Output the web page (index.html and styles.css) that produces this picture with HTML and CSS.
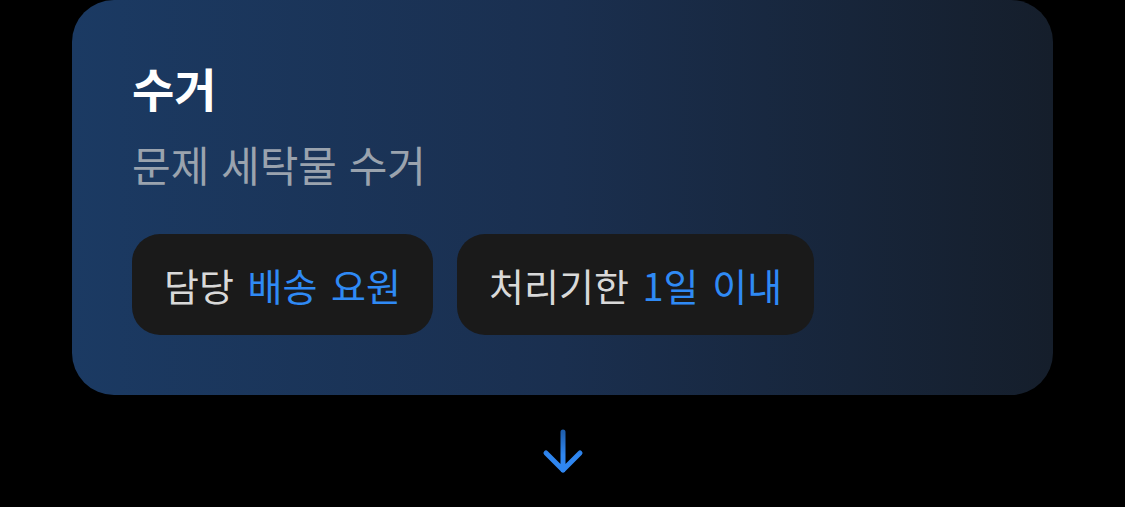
FILE: index.html
```html
<!DOCTYPE html>
<html lang="ko">
<head>
  <meta charset="UTF-8">
  <title>수거</title>
  <link rel="stylesheet" href="styles.css">
</head>
<body>
  <section class="card">
    <h2 class="title">수거</h2>
    <p class="subtitle">문제 세탁물 수거</p>
    <div class="tags">
      <div class="tag">담당 <span class="accent">배송 요원</span></div>
      <div class="tag">처리기한 <span class="accent">1일 이내</span></div>
    </div>
  </section>

  <div class="next">
    <svg width="44" height="48" viewBox="0 0 44 48">
      <defs>
        <linearGradient id="arrowGrad" x1="0" y1="0" x2="0" y2="1">
          <stop offset="0" stop-color="#1f5fae"/>
          <stop offset="0.6" stop-color="#2f86f0"/>
          <stop offset="1" stop-color="#2f86f0"/>
        </linearGradient>
      </defs>
      <path d="M22 4 V42 M5 25 L22 42 L39 25" fill="none" stroke="url(#arrowGrad)" stroke-width="5" stroke-linecap="round" stroke-linejoin="round"/>
    </svg>
  </div>
</body>
</html>
```

FILE: styles.css
```css
body {
  margin: 0;
  background: #000;
  font-family: "Noto Sans CJK KR", "Noto Sans", sans-serif;
}
.card {
  margin: 0 72px;
  height: 395px;
  box-sizing: border-box;
  padding: 59px 60px 0;
  border-radius: 42px;
  background: linear-gradient(90deg, #1b3a63 0%, #1a2f4f 50%, #151e2b 100%);
}
.title {
  margin: 0;
  font-size: 46px;
  font-weight: 700;
  line-height: 56px;
  color: #fff;
}
.subtitle {
  margin: 24px 0 0;
  font-size: 42px;
  line-height: 50px;
  color: #9aa3ae;
}
.tags {
  display: flex;
  gap: 24px;
  margin-top: 45px;
}
.tag {
  height: 101px;
  padding: 0 32px;
  line-height: 101px;
  border-radius: 28px;
  background: #1a1a1a;
  color: #d9d9d9;
  font-size: 38px;
  word-spacing: 3px;
  white-space: nowrap;
}
.accent {
  color: #2f8af5;
}
.next {
  display: flex;
  justify-content: center;
  padding-top: 33px;
}
```
